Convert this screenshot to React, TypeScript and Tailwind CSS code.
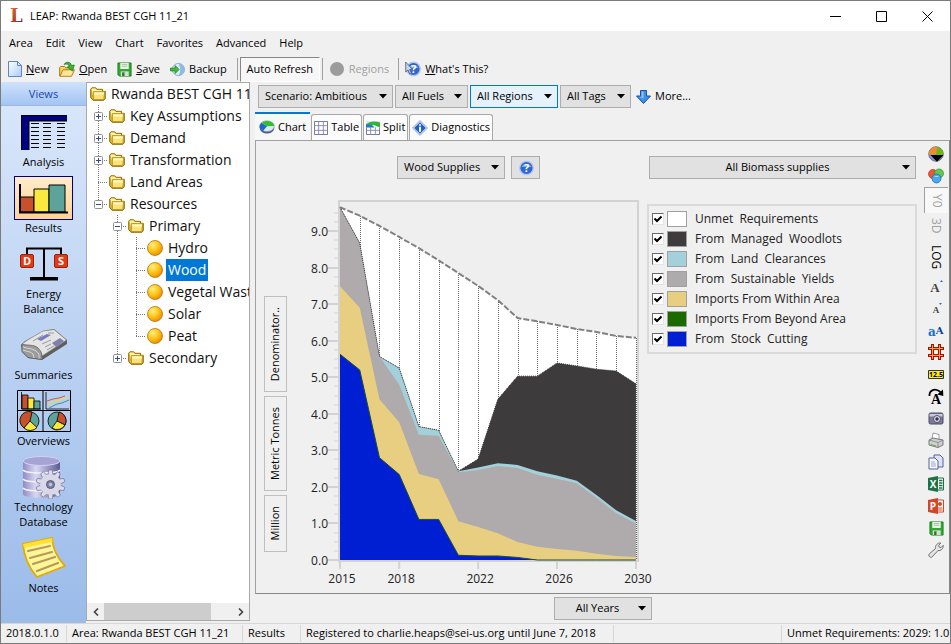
import { useState, type ReactNode } from "react";
import clsx from "clsx";

const YEARS = 16;
const X0 = 49;
const Y0 = 366;
const STEP = 19.73;
const UNIT = 36.55;

const top = [9.65, 9.42, 9.14, 8.84, 8.53, 8.2, 7.85, 7.5, 7.11, 6.62, 6.53, 6.43, 6.32, 6.24, 6.13, 6.08];

const areas = [
  {
    name: "woodlots",
    fill: "#3d3b3c",
    data: [9.65, 8.67, 5.57, 5.25, 3.65, 3.55, 2.43, 2.76, 4.4, 5.03, 5.03, 5.39, 5.31, 5.22, 5.17, 4.82],
  },
  {
    name: "clearances",
    fill: "#a3d0da",
    data: [9.65, 8.67, 5.57, 5.25, 3.65, 3.55, 2.43, 2.53, 2.65, 2.6, 2.43, 2.31, 2.17, 1.78, 1.36, 1.07],
  },
  {
    name: "yields",
    fill: "#afabac",
    data: [9.65, 8.67, 5.57, 4.8, 3.43, 3.4, 2.4, 2.46, 2.57, 2.52, 2.33, 2.22, 2.1, 1.7, 1.28, 1.0],
  },
  {
    name: "imports",
    fill: "#e8ce80",
    data: [7.49, 6.9, 4.4, 3.77, 2.35, 2.21, 1.06, 0.9, 0.73, 0.49, 0.36, 0.3, 0.25, 0.17, 0.11, 0.08],
  },
  {
    name: "stock",
    fill: "#001fd2",
    data: [5.63, 5.2, 2.8, 2.34, 1.11, 1.11, 0.13, 0.11, 0.11, 0.07, 0, 0, 0, 0, 0, 0],
  },
];

const px = (i: number) => X0 + i * STEP;
const py = (v: number) => Y0 - v * UNIT;
const line = (data: number[]) => data.map((v, i) => `${px(i)},${py(v)}`).join(" ");
const area = (data: number[]) => `${px(0)},${Y0} ${line(data)} ${px(YEARS - 1)},${Y0}`;

function AreaChart() {
  return (
    <svg viewBox="0 0 356 395" className="h-auto w-full overflow-visible" role="img" aria-label="Wood supplies by year">
      <rect x="48" y="7" width="299" height="360" fill="#efefef" stroke="#d3d3d3" strokeWidth="2" />
      {Array.from({ length: 39 }, (_, i) => (
        <line
          key={i}
          x1={i % 4 === 0 ? 37 : 43}
          x2="47"
          y1={Math.round(py(i / 4))}
          y2={Math.round(py(i / 4))}
          stroke="#d3d3d3"
          strokeWidth={i % 4 === 0 ? 2 : 1}
        />
      ))}
      {Array.from({ length: 10 }, (_, i) => (
        <text key={i} x="37" y={Math.round(py(i)) + 5} textAnchor="end" fontSize="12" fill="#222">
          {i}.0
        </text>
      ))}
      <polygon points={area(top)} fill="#fff" />
      {top.map((v, i) => (
        <line
          key={i}
          x1={Math.round(px(i)) + 0.5}
          x2={Math.round(px(i)) + 0.5}
          y1={Math.round(py(v))}
          y2={Y0}
          stroke="#6a6a6a"
          strokeDasharray="1 1"
        />
      ))}
      {areas.map((a) => (
        <polygon key={a.name} points={area(a.data)} fill={a.fill} />
      ))}
      <polyline points={line(areas[0].data)} fill="none" stroke="#333" strokeDasharray="1 1" />
      <polyline points={line(areas[4].data)} fill="none" stroke="#1f4d2a" />
      <polyline points={line(top)} fill="none" stroke="#808080" strokeWidth="2" strokeDasharray="6 2" />
      {[2015, 2018, 2022, 2026, 2030].map((year) => (
        <g key={year}>
          <line x1={px(year - 2015)} x2={px(year - 2015)} y1="368" y2="375" stroke="#d3d3d3" strokeWidth="2" />
          <text x={px(year - 2015) + 2} y="389" textAnchor="middle" fontSize="12" fill="#222">
            {year}
          </text>
        </g>
      ))}
    </svg>
  );
}

function Dropdown({ label, value, className, center }: { label: string; value: string; className: string; center?: boolean }) {
  return (
    <div className={clsx("relative h-[23px] shrink-0", className)}>
      <select
        aria-label={label}
        className={clsx(
          "h-full w-full appearance-none border border-[#adadad] bg-[#e1e1e1] pr-4 pl-1.5",
          "in-[.hot]:border-[#0078d7] in-[.hot]:bg-[#e5f1fb]",
          center && "text-center"
        )}
      >
        <option>{value}</option>
      </select>
      <svg viewBox="0 0 8 5" className="pointer-events-none absolute top-[9px] right-1.5 h-[5px] w-2">
        <path d="M0 0h8L4 4.5z" />
      </svg>
    </div>
  );
}

/* ---- small icons ---- */

function PageIcon() {
  return (
    <svg viewBox="0 0 14 16" className="h-4 w-3.5">
      <defs>
        <linearGradient id="page" x1="0" y1="0" x2="1" y2="1">
          <stop offset="0" stopColor="#fff" />
          <stop offset="1" stopColor="#a9cdf5" />
        </linearGradient>
      </defs>
      <path d="M.5.5h9l4 4v11H.5z" fill="url(#page)" stroke="#5f87bd" />
      <path d="M9.5.5v4h4z" fill="#dceafa" stroke="#5f87bd" />
    </svg>
  );
}

function FolderIcon() {
  return (
    <svg viewBox="0 0 16 14" className="h-3.5 w-4 shrink-0">
      <path d="M.7 10.500V2.200L1.900.8h3.800l1.300 1.500h5.500v2H15.300v7.500l-1.400 1.500H3z" fill="#dcb432" stroke="#8f6d08" />
      <path d="M1.500 2.200 2.200 1.500h3.200l1.300 1.500h5v1.300H3.300v5.500z" fill="#fff3a8" />
      <path d="M3.400 4.600h11.300L13.800 12.500H3.400z" fill="#fbe276" stroke="#b08c1a" strokeWidth=".8" />
      <path d="M4.200 5.500h9.400v2H4.200z" fill="#fff8c9" />
    </svg>
  );
}

function OpenIcon() {
  return (
    <svg viewBox="0 0 16 16" className="size-4">
      <path d="M.7 15V6.500l1-1h4l1 1.300h5V9h-7z" fill="#f6d768" stroke="#a9740d" />
      <path d="M.9 15.300 4 8.800h11.500l-3 6.500z" fill="#fde797" stroke="#b8801a" />
      <path d="M5 3.500C7 .2 11.500.3 12.500 4.500l2.800-.5-1.800 6-5.200-4 2-.4C10 3 7.500 2.400 5 3.500z" fill="#39b52f" stroke="#14771a" strokeWidth=".7" />
    </svg>
  );
}

function DiskIcon() {
  return (
    <svg viewBox="0 0 16 16" className="size-[15px]">
      <path d="M1 1h14v14H2.500L1 13.500z" fill="#35a832" stroke="#1b7d1d" />
      <path d="M3.500 1h9v6.500h-9z" fill="#e9f6e8" />
      <path d="M5 2.500h6M5 4.500h6" stroke="#9dbf9c" />
      <path d="M4 10h8.500v5H4z" fill="#d4ddd3" />
      <path d="M5.500 11h2.500v4H5.500z" fill="#27762a" />
    </svg>
  );
}

function BackupIcon() {
  return (
    <svg viewBox="0 0 16 16" className="size-[15px]">
      <circle cx="9" cy="8" r="6.500" fill="#dcebfa" stroke="#87a8ce" />
      <path d="M9 1.500A6.500 6.500 0 0 1 9 14.500a10 10 0 0 0 2-6.500 10 10 0 0 0-2-6.500z" fill="#8fb8e4" />
      <path d="M.5 6.500h5V3.800L9.700 8l-4.200 4.200V9.500h-5z" fill="#46bd3b" stroke="#177d1c" strokeWidth=".8" />
    </svg>
  );
}

function HelpIcon({ pointer }: { pointer?: boolean }) {
  return (
    <svg viewBox="0 0 16 16" className="size-4">
      <circle cx="8.500" cy="8" r="6.800" fill="#2f66cf" stroke="#b5c9ea" strokeWidth="1.400" />
      <path d="M3.500 7a5.300 4.500 0 0 1 10 0z" fill="#7ba5ec" />
      <text x="8.500" y="12" textAnchor="middle" fontSize="11" fontWeight="700" fill="#fff">
        ?
      </text>
      {pointer && <path d="M.7 1v10l2.300-2 1.800 4 1.600-.8-1.700-3.700H7.500z" fill="#c9d4e4" stroke="#4d5c77" strokeWidth=".8" />}
    </svg>
  );
}

function GridIcon({ split }: { split?: boolean }) {
  return (
    <svg viewBox="0 0 15 15" className="size-3.5">
      <path d="M.5.5h14v14H.5z" fill="#fff" stroke="#6b6b9e" />
      <path d="M.5 5h14M.5 10h14M5 .5v14M10 .5v14" stroke="#8787b8" />
      {split && (
        <>
          <path d="M0 0h15v7H0z" fill="#ddeaf5" />
          <path d="M0 6V3.500C3 .5 9-.5 15 1.500v5.500L8 4z" fill="#2fb52f" />
          <path d="M0 7V4h6l3 3z" fill="#2773d9" />
        </>
      )}
    </svg>
  );
}

function PieTabIcon() {
  return (
    <svg viewBox="0 0 16 14" className="h-3.5 w-4">
      <ellipse cx="8" cy="8" rx="7.300" ry="5.500" fill="#4a5f86" />
      <ellipse cx="8" cy="6.200" rx="7.300" ry="5.400" fill="#dfe9f6" stroke="#7a8db0" strokeWidth=".6" />
      <path d="M8 6.200 4 11A7.300 5.400 0 0 1 2.500 2.800z" fill="#1f65d6" />
      <path d="M8 6.200 2.500 2.800A7.300 5.400 0 0 1 15.200 6z" fill="#2fc02c" />
    </svg>
  );
}

function InfoIcon() {
  return (
    <svg viewBox="0 0 16 16" className="size-4">
      <path d="M8 .6 15.400 8 8 15.400.6 8z" fill="#dfe8f6" stroke="#8aa4cc" />
      <path d="M8 2.200 13.800 8 8 13.800 2.200 8z" fill="#1f5fc8" />
      <path d="M7 4.200h2v1.500H7zM7 6.700h2v5H7z" fill="#fff" />
    </svg>
  );
}

/* ---- views bar ---- */

function AnalysisIcon() {
  return (
    <svg viewBox="0 0 46 35" className="h-[35px] w-[46px]">
      <path d="M0 0h46v6H8v29H0z" fill="#000080" />
      <path d="M0 .5h46M.5 0v35M8 6v29M8 6h38" stroke="#000" />
      <path d="M10 8.500h8M22 8.500h8M36 8.500h8M10 12.500h8M22 12.500h8M36 12.500h8M10 16.500h8M22 16.500h8M36 16.500h8M10 20.500h8M22 20.500h8M36 20.500h8M10 24.500h8M22 24.500h8M36 24.500h8M10 28.500h8M22 28.500h8M36 28.500h8M10 32.500h8M22 32.500h8M36 32.500h8" stroke="#000" />
    </svg>
  );
}

function ResultsIcon() {
  return (
    <svg viewBox="0 0 49 31" className="h-[31px] w-[49px]">
      <path d="M1.500 14H15v15H1.500z" fill="#c8512b" stroke="#000" />
      <path d="M15 6h15v23H15z" fill="#f8e83f" stroke="#000" />
      <path d="M30 2h16v27H30z" fill="#5ba39b" stroke="#000" />
      <path d="M1 1v28.500h48" fill="none" stroke="#000" strokeWidth="2" />
    </svg>
  );
}

function BalanceIcon() {
  return (
    <svg viewBox="0 0 48 34" className="h-[34px] w-12">
      <path d="M7 7V1.500h34V7M24 1v30" fill="none" stroke="#000" strokeWidth="2" />
      <path d="M10 30h28v3.500H10z" />
      <rect x=".5" y="7.500" width="13" height="13" rx="1.500" fill="#e23a14" stroke="#9c1f08" />
      <rect x="34.500" y="7.500" width="13" height="13" rx="1.500" fill="#e23a14" stroke="#9c1f08" />
      <text x="7" y="18" textAnchor="middle" fontSize="11" fontWeight="700" fill="#fff">
        D
      </text>
      <text x="41" y="18" textAnchor="middle" fontSize="11" fontWeight="700" fill="#fff">
        S
      </text>
    </svg>
  );
}

function NewsIcon() {
  return (
    <svg viewBox="0 0 46 32" className="h-8 w-[46px]">
      <path d="M0 16 4 12 23 2 33 0 46 11v4L21 31 7 29l-6-6z" fill="#5f5f5f" />
      <path d="M1 15c5-4 14-9 21-13l11-1.500 12.500 10.500L21 27c-2-5-5-8-10-9-4 0-7 0-10-3z" fill="#e4e4e4" stroke="#8a8a8a" strokeWidth=".8" />
      <path d="M1 15c5 2 12 0 16 4s4 6 4 11.500L7 28.500l-6-6z" fill="#9b9b9b" stroke="#606060" strokeWidth=".8" />
      <path d="M2 18c5 2 9 1 13 4s3 5 3 7.500M2 21c4 2 8 1 10 4l1 4" fill="none" stroke="#d8d8d8" />
      <path d="M16 10 26 5l4 1-10 6z" fill="#7a7ac4" />
      <path d="M31 14 39 9l4 3-8 6z" fill="#8080ac" />
      <path d="m12 12 10-6M27 4h6M21 15l9-4M24 18l6-3M26 21l7-4" stroke="#9a9a9a" />
    </svg>
  );
}

function OverviewsIcon() {
  return (
    <svg viewBox="0 0 54 42" className="h-[42px] w-[54px]">
      <path d="M.5.5h53v41H.5zM26 0v42M0 20.500h54" fill="none" stroke="#000" />
      <g stroke="#000" strokeWidth=".8">
        <path d="M5 5h6v14H5z" fill="#c8512b" />
        <path d="M11 8h6v11h-6z" fill="#f8e83f" />
        <path d="M17 11h6v8h-6z" fill="#5ba39b" />
        <path d="M4.500 2v17H24M29 2v17h23" fill="none" />
        <circle cx="13" cy="31" r="9" fill="#5ba39b" />
        <path d="M13 31 7 38A9 9 0 0 1 15 22z" fill="#c8512b" />
        <path d="M13 31 7 38a9 9 0 0 0 13-.5z" fill="#f8e83f" />
        <circle cx="40" cy="31" r="9" fill="#5ba39b" />
        <path d="M40 31 42 22a9 9 0 0 1 6 13z" fill="#c8512b" />
        <path d="m40 31 8 4a9 9 0 0 1-13 3z" fill="#f8e83f" />
      </g>
      <path d="m30 11 6-2 6-1 6-2" stroke="#e0533a" fill="none" />
      <path d="m31 15 7-4 5-1 7-3" stroke="#f0df30" fill="none" />
      <path d="m32 18 8-4 5-1 7-3" stroke="#3f958c" fill="none" />
    </svg>
  );
}

const teeth = Array.from({ length: 10 }, (_, i) => i * 36);

function DatabaseIcon() {
  return (
    <svg viewBox="0 0 44 43" className="h-[43px] w-11">
      <defs>
        <linearGradient id="db">
          <stop offset="0" stopColor="#8f8cc2" />
          <stop offset=".35" stopColor="#d9d8f3" />
          <stop offset="1" stopColor="#5d5a94" />
        </linearGradient>
      </defs>
      <path d="M1 5v33c0 5 37 5 37 0V5z" fill="url(#db)" />
      <ellipse cx="19.500" cy="5" rx="18.500" ry="4.500" fill="#a6a3d6" stroke="#d5d3f0" />
      <path d="M1 14c3 4 34 4 37 0M1 23c3 4 34 4 37 0M1 32c3 4 34 4 37 0" fill="none" stroke="#f1f0fc" strokeWidth="1.500" />
      <g fill="#dcdcec" stroke="#77779a" strokeWidth=".7">
        {teeth.map((deg) => (
          <path key={deg} d="M26 19l.8-5h3.400l.8 5z" transform={`rotate(${deg} 28.500 28.500)`} />
        ))}
      </g>
      <circle cx="28.500" cy="28.500" r="10.500" fill="#d8d8e8" />
      <circle cx="28.500" cy="28.500" r="4" fill="#7d7d9d" stroke="#5a5a7c" />
      <circle cx="28.500" cy="28.500" r="1.800" fill="#b8c6e8" />
    </svg>
  );
}

function NotesIcon() {
  return (
    <svg viewBox="0 0 44 42" className="h-[42px] w-11">
      <path d="M1 7 30 1c1 12 6 21 13 28L15 40C7 31 2 20 1 7z" fill="#fdf59a" stroke="#e5a900" strokeWidth="1.800" />
      <path d="M1 7 30 1l.5 4L2 11z" fill="#ffe135" />
      <path d="m6 14 22-5M8 21l22-6M11 27l22-7M15 34l21-8" stroke="#b79b52" strokeWidth="2.200" strokeLinecap="round" />
    </svg>
  );
}

const views: { label: string; icon: ReactNode }[] = [
  { label: "Analysis", icon: <AnalysisIcon /> },
  { label: "Results", icon: <ResultsIcon /> },
  { label: "Energy Balance", icon: <BalanceIcon /> },
  { label: "Summaries", icon: <NewsIcon /> },
  { label: "Overviews", icon: <OverviewsIcon /> },
  { label: "Technology Database", icon: <DatabaseIcon /> },
  { label: "Notes", icon: <NotesIcon /> },
];

function ViewsBar() {
  const [current, setCurrent] = useState("Results");
  return (
    <nav className="flex w-[85px] shrink-0 flex-col bg-gradient-to-b from-[#dbe8fb] to-[#9bbbe9]">
      <h2 className="h-6 border-b border-[#9db9e3] bg-gradient-to-b from-[#cfe2fb] to-[#a3c4f3] text-center leading-6 text-[#1743b5]">
        Views
      </h2>
      <div className="flex flex-col items-center gap-[7px] pt-1">
        {views.map((v) => (
          <button key={v.label} type="button" onClick={() => setCurrent(v.label)} className="flex w-20 flex-col items-center text-[12px] leading-[15px]">
            <span
              className={clsx(
                "flex h-11 w-[59px] items-center justify-center",
                current === v.label && "border border-[#000080] bg-gradient-to-b from-[#ffeccb] to-[#ffd392]"
              )}
            >
              {v.icon}
            </span>
            <span className="px-2 text-[11px]">{v.label}</span>
          </button>
        ))}
      </div>
    </nav>
  );
}

/* ---- tree ---- */

type Guide = "plus" | "minus" | "tee" | "corner" | "bar" | "none" | "minusLast" | "plusLast";

const nodes: { label: string; guides: Guide[]; leaf?: boolean }[] = [
  { label: "Rwanda BEST CGH 11_21", guides: [] },
  { label: "Key Assumptions", guides: ["plus"] },
  { label: "Demand", guides: ["plus"] },
  { label: "Transformation", guides: ["plus"] },
  { label: "Land Areas", guides: ["tee"] },
  { label: "Resources", guides: ["minusLast"] },
  { label: "Primary", guides: ["none", "minus"] },
  { label: "Hydro", guides: ["none", "bar", "tee"], leaf: true },
  { label: "Wood", guides: ["none", "bar", "tee"], leaf: true },
  { label: "Vegetal Wastes", guides: ["none", "bar", "tee"], leaf: true },
  { label: "Solar", guides: ["none", "bar", "tee"], leaf: true },
  { label: "Peat", guides: ["none", "bar", "corner"], leaf: true },
  { label: "Secondary", guides: ["none", "plusLast"] },
];

function GuideCell({ kind }: { kind: Guide }) {
  const boxed = kind.startsWith("plus") || kind.startsWith("minus");
  const last = kind === "corner" || kind.endsWith("Last");
  return (
    <svg viewBox="0 0 19 22" className="h-[22px] w-[19px] shrink-0">
      {kind !== "none" && <path d={last ? "M9.500 0v11" : "M9.500 0v22"} stroke="#777" strokeDasharray="1 1" />}
      {kind !== "none" && kind !== "bar" && <path d="M9 11.500h10" stroke="#777" strokeDasharray="1 1" />}
      {boxed && (
        <>
          <rect x="5.500" y="7.500" width="8" height="8" rx="1" fill="#fff" stroke="#919191" />
          <path d={kind.startsWith("plus") ? "M7 11.500h5M9.500 9v5" : "M7 11.500h5"} stroke="#2b4a9b" />
        </>
      )}
    </svg>
  );
}

function Ball() {
  return (
    <svg viewBox="0 0 16 16" className="size-4 shrink-0">
      <defs>
        <radialGradient id="ball" cx=".35" cy=".3" r=".75">
          <stop offset="0" stopColor="#fff08a" />
          <stop offset=".5" stopColor="#ffc61a" />
          <stop offset="1" stopColor="#e98b00" />
        </radialGradient>
      </defs>
      <circle cx="8" cy="8" r="7.500" fill="url(#ball)" stroke="#b87408" strokeWidth=".8" />
    </svg>
  );
}

function Tree() {
  const [selected, setSelected] = useState("Wood");
  return (
    <aside className="mb-0.5 flex w-[164px] shrink-0 flex-col border border-[#a9a9a9] bg-white">
      <ul className="flex-1 overflow-hidden text-[14px] text-[#111]">
        {nodes.map((n) => (
          <li key={n.label} className="flex h-[22px] items-center pl-0.5 whitespace-nowrap">
            {n.guides.map((g, i) => (
              <GuideCell key={i} kind={g} />
            ))}
            <button type="button" onClick={() => setSelected(n.label)} className="flex items-center gap-[3px] pl-px">
              {n.leaf ? <Ball /> : <FolderIcon />}
              <span className={clsx("px-0.5 leading-[22px]", selected === n.label && "bg-[#0078d7] text-white")}>{n.label}</span>
            </button>
          </li>
        ))}
      </ul>
      <div className="flex h-[17px] items-center bg-[#f0f0f0]">
        <button type="button" aria-label="Scroll left" className="flex w-[17px] justify-center">
          <svg viewBox="0 0 6 8" className="h-2 w-1.5">
            <path d="M5 .5 1.500 4 5 7.500" fill="none" stroke="#444" strokeWidth="1.600" />
          </svg>
        </button>
        <div className="flex h-full flex-1">
          <div className="h-full w-5/6 bg-[#cdcdcd]" />
        </div>
        <button type="button" aria-label="Scroll right" className="flex w-[17px] justify-center">
          <svg viewBox="0 0 6 8" className="h-2 w-1.5">
            <path d="M1 .5 4.500 4 1 7.500" fill="none" stroke="#444" strokeWidth="1.600" />
          </svg>
        </button>
      </div>
    </aside>
  );
}

/* ---- legend ---- */

const legend = [
  { label: "Unmet  Requirements", swatch: "bg-white" },
  { label: "From  Managed  Woodlots", swatch: "bg-[#3d3b3c]" },
  { label: "From  Land  Clearances", swatch: "bg-[#a3d0da]" },
  { label: "From  Sustainable  Yields", swatch: "bg-[#afabac]" },
  { label: "Imports From Within Area", swatch: "bg-[#e8ce80]" },
  { label: "Imports From Beyond Area", swatch: "bg-[#1b6a00]" },
  { label: "From  Stock  Cutting", swatch: "bg-[#001fd2]" },
];

function Legend() {
  return (
    <div className="border-2 border-[#dadada] py-[3px] pl-[3px]">
      {legend.map((item) => (
        <label key={item.label} className="flex h-5 items-center text-[12px] whitespace-pre text-[#222]">
          <span className="grid size-3 place-items-center">
            <input
              type="checkbox"
              defaultChecked
              className="peer col-start-1 row-start-1 size-3 appearance-none border border-t-[#696969] border-r-[#e3e3e3] border-b-[#e3e3e3] border-l-[#696969] bg-white"
            />
            <svg viewBox="0 0 8 8" className="pointer-events-none invisible col-start-1 row-start-1 size-2 peer-checked:visible">
              <path d="M.5 3.500 3 6 7.500 1.500" fill="none" stroke="#000" strokeWidth="2" />
            </svg>
          </span>
          <span className={clsx("mr-2 ml-[3px] h-4 w-5 border border-[#a0a0a0]", item.swatch)} />
          {item.label}
        </label>
      ))}
    </div>
  );
}

/* ---- chart tools on the right edge ---- */

const tools: { label: string; icon: ReactNode; tall?: boolean; pressed?: boolean }[] = [
  {
    label: "Chart type",
    icon: (
      <svg viewBox="0 0 16 16" className="size-4">
        <circle cx="8" cy="8" r="7.300" fill="#8298e0" stroke="#666" strokeWidth=".8" />
        <path d="M8 8.500.8 8.500A7.300 7.300 0 0 1 9.500.9z" fill="#f58a2c" />
        <path d="M8 8.500 9.500.9A7.300 7.300 0 0 1 15.200 9z" fill="#6fb60d" />
        <path d="M2.500 9h13L9 15.800z" />
      </svg>
    ),
  },
  {
    label: "Colors",
    icon: (
      <svg viewBox="0 0 16 16" className="size-4">
        <circle cx="5" cy="6" r="4.500" fill="#ee5535" stroke="#b8331a" strokeWidth=".7" />
        <circle cx="11" cy="5.500" r="4.500" fill="#62c84e" stroke="#2f8f28" strokeWidth=".7" />
        <circle cx="8.500" cy="10.500" r="4.500" fill="#4ba6f0" stroke="#1a66b8" strokeWidth=".7" />
        <path d="M6 9a4 4 0 0 1 5 0z" fill="#b9e1fb" />
      </svg>
    ),
  },
  { label: "Y0", icon: <span className="text-[#a0a0a0] [writing-mode:vertical-rl]">Y0</span>, tall: true, pressed: true },
  { label: "3D", icon: <span className="text-[#a0a0a0] [writing-mode:vertical-rl]">3D</span>, tall: true },
  { label: "LOG", icon: <span className="[writing-mode:vertical-rl]">LOG</span>, tall: true },
  {
    label: "Larger text",
    icon: (
      <svg viewBox="0 0 16 16" className="size-4">
        <text x="7" y="14" textAnchor="middle" fontSize="13" fontWeight="700" fontFamily="Liberation Serif" fill="#444">
          A
        </text>
        <path d="m12 4 1.500-2L15 4z" fill="#3b6bc4" />
      </svg>
    ),
  },
  {
    label: "Smaller text",
    icon: (
      <svg viewBox="0 0 16 16" className="size-4">
        <text x="8" y="13" textAnchor="middle" fontSize="9" fontWeight="700" fontFamily="Liberation Serif" fill="#444">
          A
        </text>
        <path d="m11 3 1.500 2L14 3z" fill="#3b6bc4" />
      </svg>
    ),
  },
  {
    label: "Font",
    icon: (
      <svg viewBox="0 0 16 16" className="size-4">
        <text x="0" y="14" fontSize="12" fontWeight="700" fontFamily="DejaVu Serif" fill="#0d3f96">
          <tspan fill="#1b6fd4">a</tspan>
          <tspan dy="-2" fontSize="10">
            A
          </tspan>
        </text>
      </svg>
    ),
  },
  {
    label: "Gridlines",
    icon: (
      <svg viewBox="0 0 16 16" className="size-4">
        <path d="M4.500 0v16M11.500 0v16M0 4.500h16M0 11.500h16" stroke="#a80f00" strokeWidth="3" />
        <path d="M4.500 1v14M11.500 1v14M1 4.500h14M1 11.500h14" stroke="#f6a04a" />
      </svg>
    ),
  },
  {
    label: "Values",
    icon: (
      <svg viewBox="0 0 16 9" className="h-[9px] w-4">
        <path d="M.5.500h15v8H.5z" fill="#fdf000" stroke="#333" />
        <text x="8" y="7" textAnchor="middle" fontSize="7" fontWeight="700" fill="#000">
          12.5
        </text>
      </svg>
    ),
  },
  {
    label: "Rotate labels",
    icon: (
      <svg viewBox="0 0 16 16" className="size-4">
        <text x="8" y="15.500" textAnchor="middle" fontSize="14" fontWeight="700" fontFamily="Liberation Serif">
          A
        </text>
        <path d="M1.500 8C1 2 7 -.5 12.500 4" fill="none" stroke="#000" strokeWidth="1.800" />
        <path d="m15 1.500.3 6.500-6-1.500z" />
      </svg>
    ),
  },
  {
    label: "Copy image",
    icon: (
      <svg viewBox="0 0 16 14" className="h-3.5 w-4">
        <rect x="1" y="2" width="14" height="11" rx="1.500" fill="#7b7b98" stroke="#4b4b64" />
        <path d="M1.500 3h13v2.500h-13z" fill="#c8c8dc" />
        <circle cx="9" cy="8" r="3.500" fill="#dadaea" stroke="#50506c" />
        <circle cx="9" cy="8" r="1.700" fill="#33334d" />
      </svg>
    ),
  },
  {
    label: "Print",
    icon: (
      <svg viewBox="0 0 16 16" className="size-4">
        <path d="M4 7 5 1l6 1.500L11 8z" fill="#fff" stroke="#888" strokeWidth=".8" />
        <path d="m1 8 4-2 10 2v5l-5 2.500L1 13z" fill="#cfcfcf" stroke="#6c6c6c" strokeWidth=".9" />
        <path d="m1 8 9 2.500 5-2.500M10 10.500v5" fill="none" stroke="#808080" strokeWidth=".8" />
        <path d="m3 12 5 1.500v1L3 13z" fill="#68b048" />
      </svg>
    ),
  },
  {
    label: "Copy",
    icon: (
      <svg viewBox="0 0 16 16" className="size-4">
        <path d="M6 1h6l3 3v9H6z" fill="#dfe2f6" stroke="#5561a0" />
        <path d="M1 4h6l3 3v8H1z" fill="#f7f8fe" stroke="#5561a0" />
        <path d="M3 8h4M3 10h5M3 12h5" stroke="#9aa5d2" />
      </svg>
    ),
  },
  {
    label: "Export to Excel",
    icon: (
      <svg viewBox="0 0 16 16" className="size-4">
        <path d="M9 2h6.500v12H9z" fill="#fff" stroke="#1e7145" />
        <path d="M11 4.500h3.500M11 7h3.500M11 9.500h3.500M11 12h3.500" stroke="#1e7145" strokeWidth="1.300" />
        <path d="m0 2 10-2v16L0 14z" fill="#1e7145" />
        <text x="5" y="12" textAnchor="middle" fontSize="10" fontWeight="700" fill="#fff">
          X
        </text>
      </svg>
    ),
  },
  {
    label: "Export to PowerPoint",
    icon: (
      <svg viewBox="0 0 16 16" className="size-4">
        <path d="M9 2h6.500v12H9z" fill="#fff" stroke="#d24625" />
        <circle cx="12" cy="6" r="2" fill="#d24625" />
        <path d="M10 10h4.500M10 12h4.500" stroke="#d24625" />
        <path d="m0 2 10-2v16L0 14z" fill="#d24625" />
        <text x="5" y="12" textAnchor="middle" fontSize="10" fontWeight="700" fill="#fff">
          P
        </text>
      </svg>
    ),
  },
  { label: "Save chart", icon: <DiskIcon /> },
  {
    label: "Settings",
    icon: (
      <svg viewBox="0 0 16 16" className="size-4">
        <path
          d="M1.200 12 7.500 6.500C7 3.500 9.500.6 12.800 1L10.700 3.300l.5 1.800 1.900.4 2.100-2.200c.4 3.200-2.200 5.700-5.200 5.300L4.200 14.800c-2 1.500-4.400-1-3-2.800z"
          fill="#e4e4e4"
          stroke="#6f6f6f"
        />
      </svg>
    ),
  },
];

function ToolStrip() {
  return (
    <div className="flex w-[26px] shrink-0 flex-col items-center pt-0.5">
      {tools.map((t) => (
        <button
          key={t.label}
          type="button"
          aria-label={t.label}
          className={clsx(
            "flex w-6 items-center justify-center text-[12px] leading-4",
            t.label === "LOG" ? "h-9" : t.tall ? "h-[26px]" : "h-[22px]",
            t.pressed && "border-t border-l border-[#a0a0a0] bg-[#f8f8f8]"
          )}
        >
          {t.icon}
        </button>
      ))}
    </div>
  );
}

/* ---- page ---- */

const toolbar = [
  { key: "N", rest: "ew", icon: <PageIcon /> },
  { key: "O", rest: "pen", icon: <OpenIcon /> },
  { key: "S", rest: "ave", icon: <DiskIcon /> },
  { key: "", rest: "Backup", icon: <BackupIcon /> },
];

const tabs = [
  { label: "Chart", icon: <PieTabIcon /> },
  { label: "Table", icon: <GridIcon /> },
  { label: "Split", icon: <GridIcon split /> },
  { label: "Diagnostics", icon: <InfoIcon /> },
];

const axisButtons = [
  { label: "Denominator..", height: "h-24" },
  { label: "Metric Tonnes", height: "h-[95px]" },
  { label: "Million", height: "h-[57px]" },
];

export default function App() {
  const [tab, setTab] = useState("Chart");

  return (
    <div className="flex min-h-screen flex-col overflow-hidden border border-[#7b7b7b] bg-[#f0f0f0] font-['Open_Sans','Noto_Sans',sans-serif] text-[11px] text-black">
      <header className="flex h-[30px] items-center bg-white pl-2">
        <svg viewBox="0 0 14 16" className="h-4 w-3.5 overflow-visible">
          <defs>
            <linearGradient id="leap" x1="0" y1="0" x2="1" y2="1">
              <stop offset="0" stopColor="#ef7d3a" />
              <stop offset=".6" stopColor="#a33a25" />
              <stop offset="1" stopColor="#4b2a3c" />
            </linearGradient>
          </defs>
          <text x="1" y="14" fontSize="18" fontWeight="700" fontFamily="DejaVu Serif" fill="url(#leap)">
            L
          </text>
        </svg>
        <h1 className="flex-1 pl-[7px]">LEAP: Rwanda BEST CGH 11_21</h1>
        {[
          { label: "Minimize", d: "M0 5.500h11" },
          { label: "Maximize", d: "M.5.500h10v10H.5z" },
          { label: "Close", d: "M.5.500l10 10M10.500.500l-10 10" },
        ].map((b) => (
          <button key={b.label} type="button" aria-label={b.label} className="flex h-full w-[46px] items-center justify-center">
            <svg viewBox="0 0 11 11" className="size-[11px]">
              <path d={b.d} fill="none" stroke="#000" />
            </svg>
          </button>
        ))}
      </header>

      <nav className="flex h-[25px] items-center gap-[13px] pl-2">
        {["Area", "Edit", "View", "Chart", "Favorites", "Advanced", "Help"].map((m) => (
          <button key={m} type="button">
            {m}
          </button>
        ))}
      </nav>

      <div className="flex h-[26px] items-center pl-[7px]">
        <div className="flex gap-[10px]">
          {toolbar.map((t) => (
            <button key={t.rest} type="button" className="flex items-center gap-1">
              {t.icon}
              <span>
                <u>{t.key}</u>
                {t.rest}
              </span>
            </button>
          ))}
        </div>
        <div className="mr-0.5 ml-[10px] h-[22px] w-px bg-[#a0a0a0]" />
        <button type="button" className="h-[25px] w-20 border border-t-[#888] border-r-white border-b-white border-l-[#888] bg-[#f7f7f7]">
          Auto Refresh
        </button>
        <div className="mr-[7px] ml-0.5 h-[22px] w-px bg-[#a0a0a0]" />
        <button type="button" disabled className="flex items-center gap-[5px] text-[#a0a0a0]">
          <span className="size-3.5 rounded-full bg-[#9c9c9c]" />
          Regions
        </button>
        <div className="mr-1.5 ml-[9px] h-[22px] w-px bg-[#a0a0a0]" />
        <button type="button" className="flex items-center gap-1">
          <HelpIcon pointer />
          <span>
            <u>W</u>hat's This?
          </span>
        </button>
      </div>

      <div className="flex flex-1">
        <ViewsBar />
        <Tree />

        <main className="flex min-w-0 flex-1 flex-col pl-[5px]">
          <div className="flex items-center gap-0.5 pt-[3px] pl-[3px]">
            <Dropdown label="Scenario" value="Scenario: Ambitious" className="w-[135px]" />
            <Dropdown label="Fuels" value="All Fuels" className="w-[73px]" />
            <Dropdown label="Regions" value="All Regions" className="hot w-[88px]" />
            <Dropdown label="Tags" value="All Tags" className="w-[71px]" />
            <button type="button" className="flex items-center gap-1 pl-[3px]">
              <svg viewBox="0 0 15 14" className="h-3.5 w-[15px]">
                <path d="M4.500.5h6V6h4l-7 7.500L.5 6h4z" fill="#3f8fe8" stroke="#1a4fa5" />
                <path d="M5.500 1.500h2v7L3 7h2.500z" fill="#8cc2f7" />
              </svg>
              More...
            </button>
          </div>

          <div role="tablist" className="flex h-8 items-end gap-px pt-1">
            {tabs.map((t) => (
              <button
                key={t.label}
                type="button"
                role="tab"
                aria-selected={tab === t.label}
                onClick={() => setTab(t.label)}
                className={clsx(
                  "flex items-center gap-[3px] border-[#a8a8a8]",
                  tab === t.label
                    ? "h-7 border-t-2 border-t-[#0078d7] bg-[#f7f7f7] px-1"
                    : "h-[26px] rounded-t-[3px] border border-b-0 bg-[#fcfcfc] px-0.5"
                )}
              >
                {t.icon}
                {t.label}
              </button>
            ))}
          </div>

          <section className="flex flex-1 border border-l-[#a0a0a0] border-t-[#a0a0a0] border-r-[#888] border-b-[#888]">
            <div className="flex min-w-0 flex-1 flex-col pt-[15px]">
              <div className="flex justify-center gap-1.5 pl-[34px]">
                <Dropdown label="Chart" value="Wood Supplies" className="w-[108px]" />
                <button type="button" aria-label="Help" className="flex h-[23px] w-[29px] items-center justify-center border border-[#adadad] bg-[#e1e1e1]">
                  <HelpIcon />
                </button>
              </div>
              <div className="flex gap-1 pt-[15px] pl-2">
                <div className="flex shrink-0 flex-col justify-end gap-1 pb-[37px]">
                  {axisButtons.map((b) => (
                    <button key={b.label} type="button" className={clsx("flex w-[23px] items-center justify-center border border-[#bfbfbf]", b.height)}>
                      <span className="rotate-180 [writing-mode:vertical-rl]">{b.label}</span>
                    </button>
                  ))}
                </div>
                <div className="min-w-0 flex-1">
                  <AreaChart />
                </div>
              </div>
            </div>

            <div className="mr-[6px] w-[270px] shrink-0 pt-[15px]">
              <Dropdown label="Branches" value="All Biomass supplies" className="mr-px mb-[25px] ml-0.5" center />
              <Legend />
            </div>

            <ToolStrip />
          </section>

          <div className="flex justify-center py-[3px]">
            <Dropdown label="Years" value="All Years" className="w-[98px]" center />
          </div>
        </main>
      </div>

      <footer className="flex h-5 items-center overflow-hidden border-t border-[#d7d7d7] whitespace-nowrap">
        <span className="w-[66px] shrink-0 border-r border-[#d7d7d7] pl-[5px]">2018.0.1.0</span>
        <span className="w-[176px] shrink-0 border-r border-[#d7d7d7] pl-[5px]">Area: Rwanda BEST CGH 11_21</span>
        <span className="w-[58px] shrink-0 border-r border-[#d7d7d7] pl-[5px]">Results</span>
        <span className="w-[313px] shrink-0 border-r border-[#d7d7d7] pl-[5px]">Registered to charlie.heaps@sei-us.org until June 7, 2018</span>
        <span className="ml-auto w-[169px] shrink-0 overflow-hidden border-l border-[#d7d7d7] pl-[5px]">Unmet Requirements: 2029: 1.0</span>
      </footer>
    </div>
  );
}
